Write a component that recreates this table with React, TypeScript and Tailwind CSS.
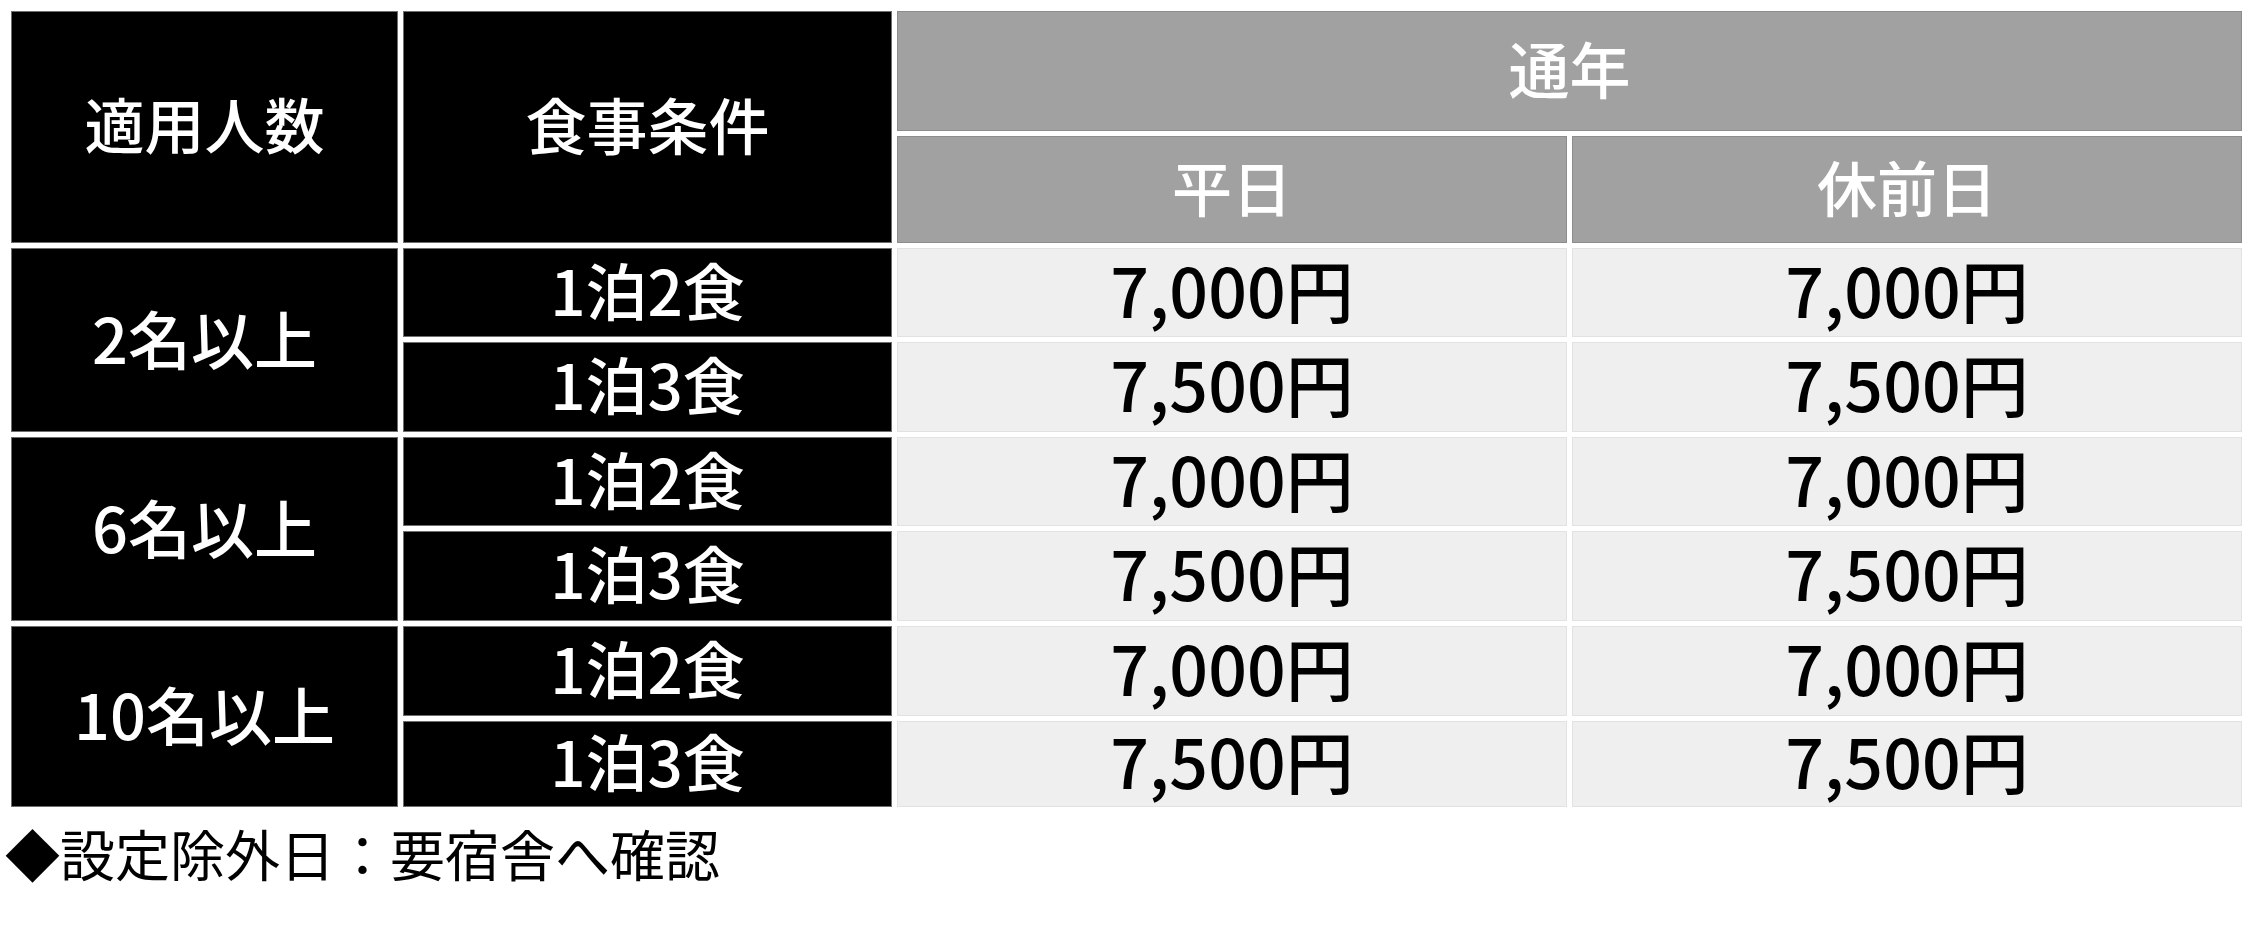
import React from "react";

const F = { fontFamily: '"Noto Sans CJK JP", "Noto Sans", sans-serif' };

const blk =
  "bg-black border border-[#6e6e6e] text-white flex items-center justify-center font-medium pb-[8px]";
const gry =
  "bg-[#a0a1a0] border border-[#8c8d8c] text-white flex items-center justify-center font-medium pb-[8px]";
const lgt =
  "bg-[#efefef] border border-[#e2e2e2] text-black flex items-center justify-center font-medium pb-[8px]";

const groups = ["2名以上", "6名以上", "10名以上"];
const meals = [
  { m: "1泊2食", p: "7,000円" },
  { m: "1泊3食", p: "7,500円" },
];

export default function App() {
  return (
    <div className="w-[2250px] h-[929px] bg-white overflow-hidden" style={F}>
      <div className="pt-[11px] pl-[11px]">
        <div className="grid grid-cols-[387px_489px_670px_670px] grid-rows-[120px_107px_89px_90px_89px_90px_90px_86px] gap-[5px] w-[2231px]">
          <div className={`${blk} row-span-2 text-[60px] leading-none`}>適用人数</div>
          <div className={`${blk} row-span-2 text-[61px] leading-none`}>食事条件</div>
          <div className={`${gry} col-span-2 text-[61px] leading-none`}>通年</div>
          <div className={`${gry} text-[60px] leading-none`}>平日</div>
          <div className={`${gry} text-[60px] leading-none`}>休前日</div>
          {groups.map((g, gi) => (
            <React.Fragment key={g}>
              <div
                className={`${blk} row-span-2 text-[63px] leading-none`}
                style={{ gridRowStart: 3 + gi * 2, gridColumnStart: 1 }}
              >
                {g}
              </div>
              {meals.map((r, ri) => (
                <React.Fragment key={r.m}>
                  <div
                    className={`${blk} text-[62px] leading-none`}
                    style={{ gridRowStart: 3 + gi * 2 + ri, gridColumnStart: 2 }}
                  >
                    {r.m}
                  </div>
                  <div
                    className={`${lgt} text-[68px] leading-none`}
                    style={{ gridRowStart: 3 + gi * 2 + ri, gridColumnStart: 3 }}
                  >
                    {r.p}
                  </div>
                  <div
                    className={`${lgt} text-[68px] leading-none`}
                    style={{ gridRowStart: 3 + gi * 2 + ri, gridColumnStart: 4 }}
                  >
                    {r.p}
                  </div>
                </React.Fragment>
              ))}
            </React.Fragment>
          ))}
        </div>
      </div>
      <div className="mt-[18px] pl-[5px] text-[55px] leading-[55px] text-black font-normal whitespace-nowrap">
        ◆設定除外日：要宿舎へ確認
      </div>
    </div>
  );
}
